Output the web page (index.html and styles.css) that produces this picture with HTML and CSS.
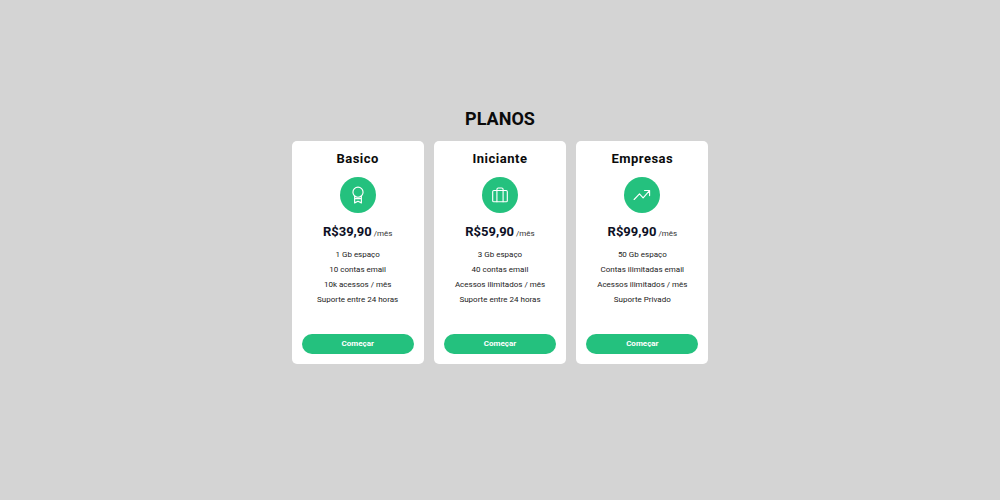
FILE: index.html
```html
<!DOCTYPE html>
<html lang="pt-BR">
<head>
<meta charset="utf-8">
<meta name="viewport" content="width=device-width, initial-scale=1">
<title>Planos</title>
<link rel="stylesheet" href="styles.css">
</head>
<body>
<main class="plans">
  <h1 class="plans-title">PLANOS</h1>
  <div class="plans-grid">
    <section class="card">
      <h2 class="card-title">Basico</h2>
      <div class="card-icon">
        <svg viewBox="0 0 32 32" aria-hidden="true"><circle cx="16" cy="11" r="9"/><path d="M10 18v12l6-3 6 3V18M10 22.500h12"/></svg>
      </div>
      <p class="price"><strong class="amount">R$39,90</strong> /mês</p>
      <ul class="features">
        <li>1 Gb espaço</li>
        <li>10 contas email</li>
        <li>10k acessos / mês</li>
        <li>Suporte entre 24 horas</li>
      </ul>
      <button class="start" type="button">Começar</button>
    </section>
    <section class="card">
      <h2 class="card-title">Iniciante</h2>
      <div class="card-icon">
        <svg viewBox="0 0 32 32" aria-hidden="true"><rect x="3" y="8" width="26" height="20" rx="2"/><path d="M10.500 28V6a2.500 2.500 0 0 1 2.500-2.500h6A2.500 2.500 0 0 1 21.500 6v22"/></svg>
      </div>
      <p class="price"><strong class="amount">R$59,90</strong> /mês</p>
      <ul class="features">
        <li>3 Gb espaço</li>
        <li>40 contas email</li>
        <li>Acessos ilimitados / mês</li>
        <li>Suporte entre 24 horas</li>
      </ul>
      <button class="start" type="button">Começar</button>
    </section>
    <section class="card">
      <h2 class="card-title">Empresas</h2>
      <div class="card-icon">
        <svg viewBox="0 0 32 32" aria-hidden="true"><path d="M2 24l9.500-10 6.500 7L29 8.500M20.500 8H29.500v9"/></svg>
      </div>
      <p class="price"><strong class="amount">R$99,90</strong> /mês</p>
      <ul class="features">
        <li>50 Gb espaço</li>
        <li>Contas ilimitadas email</li>
        <li>Acessos ilimitados / mês</li>
        <li>Suporte Privado</li>
      </ul>
      <button class="start" type="button">Começar</button>
    </section>
  </div>
</main>
</body>
</html>
```
FILE: styles.css
```css
* {
  box-sizing: border-box;
  margin: 0;
  padding: 0;
}

body {
  min-height: 100vh;
  display: flex;
  align-items: center;
  justify-content: center;
  padding: 16px;
  background: #d4d4d4;
  color: #0b0b0b;
  font-family: Roboto, "Liberation Sans", sans-serif;
}

.plans {
  width: 100%;
  max-width: 417px;
  padding-bottom: 30px;
}

.plans-title {
  margin-bottom: 10px;
  font-size: 18px;
  line-height: 24px;
  text-align: center;
}

.plans-grid {
  display: grid;
  grid-template-columns: repeat(auto-fit, minmax(120px, 1fr));
  gap: 10px;
}

.card {
  display: flex;
  flex-direction: column;
  align-items: center;
  padding: 10px;
  border-radius: 5px;
  background: #fff;
  text-align: center;
}

.card-title {
  margin-bottom: 10px;
  font-size: 13px;
  line-height: 16px;
  letter-spacing: 0.5px;
}

.card-icon {
  display: flex;
  align-items: center;
  justify-content: center;
  width: 36px;
  height: 36px;
  margin-bottom: 11px;
  border-radius: 50%;
  background: #24c17e;
}

.card-icon svg {
  width: 18px;
  height: 18px;
  fill: none;
  stroke: #fff;
  stroke-width: 2;
  stroke-linecap: round;
  stroke-linejoin: round;
}

.price {
  margin-bottom: 5px;
  color: #333;
  font-size: 8px;
  line-height: 16px;
}

.amount {
  color: #0d1025;
  font-size: 13px;
}

.features {
  margin-bottom: 27px;
  color: #222;
  font-size: 8px;
  line-height: 15px;
  list-style: none;
}

.start {
  width: 100%;
  margin-top: auto;
  border: 0;
  border-radius: 10px;
  background: #24c17e;
  color: #fff;
  font: bold 8px/20px Roboto, "Liberation Sans", sans-serif;
  cursor: pointer;
}
```
